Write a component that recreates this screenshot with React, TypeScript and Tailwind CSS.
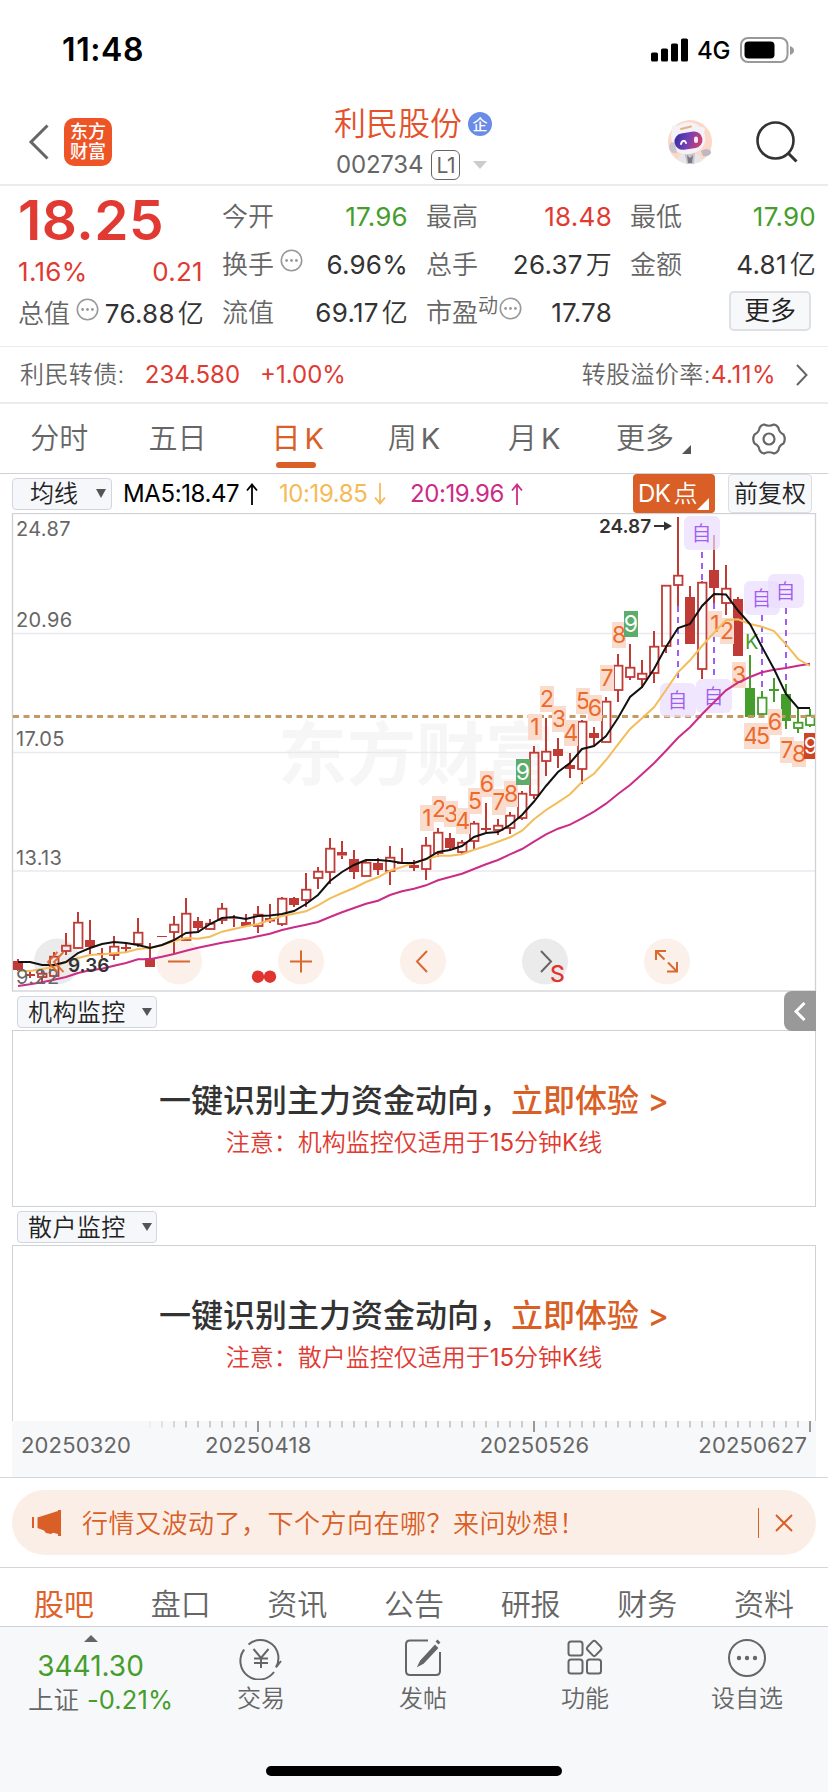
import React from "react";

type Candle = [top: number, bottom: number, high: number, low: number, kind: "h" | "f"];

/* Body top, body bottom, wick top, wick bottom, hollow or filled */
const candles: Candle[] = [
  [961, 970, 959, 971, "f"], [974, 976, 970, 978, "f"], [973, 977, 968, 982, "h"], [956, 976, 952, 977, "h"],
  [945, 951, 933, 955, "h"], [922, 948, 912, 949, "h"], [940, 947, 920, 954, "f"], [953, 954, 948, 958, "f"],
  [946, 955, 936, 960, "h"], [947, 949, 944, 953, "f"], [932, 944, 918, 947, "h"], [958, 967, 943, 967, "f"],
  [936, 937, 936, 937, "f"], [924, 932, 916, 954, "h"], [913, 940, 898, 940, "h"], [921, 928, 917, 933, "f"],
  [923, 929, 919, 930, "h"], [908, 920, 903, 924, "h"], [917, 918.5, 915, 927, "f"], [922, 926, 914, 927, "f"],
  [914, 926, 906, 933, "h"], [918, 921.5, 904, 923, "f"], [898, 924, 897, 926, "h"], [898, 905, 897, 907, "f"],
  [889, 900, 873, 907, "h"], [871, 878, 867, 889, "h"], [848, 872, 838, 884, "h"], [852, 855.5, 841, 859, "f"],
  [859, 872, 850, 879, "f"], [862, 876, 860, 876, "h"], [863, 870, 858, 875, "f"], [857, 871, 846, 885, "h"],
  [862, 864, 848, 864, "f"], [865, 868, 860, 871, "f"], [845, 869, 837, 880, "h"], [832, 853, 828, 857, "h"],
  [838, 848, 833, 850, "f"], [842, 852, 840, 854, "h"], [823, 841, 821, 850, "h"], [828, 830, 803, 832, "f"],
  [825, 830, 819, 835, "h"], [815, 828, 812, 834, "h"], [793, 818, 791, 820, "h"], [752, 795, 746, 799, "h"],
  [751, 761, 718, 776, "h"], [749, 756, 738, 768, "f"], [765, 769, 753, 778, "f"], [721, 769, 720, 784, "h"],
  [733, 738, 727, 745, "f"], [701, 742, 697, 742, "h"], [665, 690, 654, 702, "h"], [667, 677, 644, 680, "h"],
  [673, 679, 660, 688, "h"], [646, 673, 631, 683, "h"], [585, 646, 585, 653, "h"], [575, 585, 517, 606, "h"],
  [597, 644, 586, 644, "f"], [582, 669, 581, 679, "h"], [570, 588, 535, 603, "f"], [588, 603, 565, 615, "h"],
  [599, 656, 597, 656, "f"], [688, 717, 655, 717, "f"], [697, 714, 691, 717, "h"], [689, 691, 678, 702, "f"],
  [694, 721, 684, 729, "f"], [722, 728, 709, 733, "h"], [715, 725, 709, 727, "h"],
];

const ma5 = [
  962, 962, 965, 965, 962, 953, 948, 944, 942, 943, 945, 948, 945, 940, 933, 932, 924, 918, 917, 919, 916, 915.5, 914,
  911, 904, 895, 881, 872, 865, 860, 860, 861, 863, 863, 859, 852, 850, 846, 837, 833, 832, 825, 815, 801.5, 786, 772,
  763, 749, 746, 736, 718, 697, 687, 669, 647, 628, 624, 606, 594, 594.5, 610.5, 624, 647, 669, 694, 708, 708,
];
const ma10 = [
  971, 971, 969, 967, 962, 958, 955, 954.3, 953.3, 952.3, 949, 948, 945, 941, 938, 938.7, 936.7, 931.7, 929, 926.3, 924,
  920, 916, 913.7, 911.3, 905.3, 898.3, 893, 888, 882, 877.3, 870.7, 867, 863, 859.3, 855.7, 855.7, 854.3, 849.7, 846,
  841.7, 837.3, 830.7, 819.3, 810, 802.3, 794.3, 782, 773.7, 760, 744.3, 729, 718.3, 707.3, 690, 672.3, 660.3, 646,
  632.7, 620.3, 619.3, 624, 626.7, 631, 644.3, 659, 666,
];
const ma20 = [
  986, 984.3, 982.3, 979.7, 977, 973, 970.3, 968.7, 965.7, 963, 959.3, 959.3, 956.7, 954, 950.7, 947.7, 945.3, 942.7,
  940.7, 938.7, 936.3, 933.7, 930, 927.3, 924.7, 922, 917, 912.3, 908, 903.7, 900.7, 895, 891.3, 888.7, 885.3, 880.3,
  877, 873.7, 869, 864.3, 860, 854.3, 849, 841.7, 834.3, 828.7, 824.7, 818.3, 811.7, 803.7, 794, 785, 774.3, 763.3,
  750.7, 737.7, 727.3, 714.3, 702.3, 690.3, 682.7, 677, 672.3, 669.7, 668, 665.7, 663.7,
];

/* candle index, digit, top of the tag */
const counts: [number, string, number][] = [
  [34, "1", 805], [35, "2", 796], [36, "3", 801], [37, "4", 808], [38, "5", 788], [39, "6", 771], [40, "7", 789],
  [41, "8", 781], [42, "9", 759], [43, "1", 714], [44, "2", 686], [45, "3", 706], [46, "4", 720], [47, "5", 688],
  [48, "6", 695], [49, "7", 665], [50, "8", 622], [51, "9", 611], [58, "1", 611], [59, "2", 618], [60, "3", 662],
  [61, "4", 723], [62, "5", 723], [63, "6", 709], [64, "7", 737], [65, "8", 741],
];

/* x, badge top, line start, line end */
const selfMarks: [number, number, number, number][] = [
  [702, 516, 552, 581], [678, 683, 606, 682], [714, 679, 603, 679], [762, 581, 615, 691], [786, 574, 608, 684],
];

const xAt = (i: number) => 18 + 12 * i;
const line = (ys: number[]) => ys.map((y, i) => `${xAt(i)},${y}`).join(" ");

function Dots() {
  return (
    <svg className="h-[23px] w-[23px] shrink-0" viewBox="0 0 23 23">
      <circle cx="11.5" cy="11.5" r="10.2" fill="none" stroke="#999" strokeWidth="1.6" />
      <circle cx="6.6" cy="11.5" r="1.4" fill="#999" />
      <circle cx="11.5" cy="11.5" r="1.4" fill="#999" />
      <circle cx="16.4" cy="11.5" r="1.4" fill="#999" />
    </svg>
  );
}

function StatusBar() {
  return (
    <div className="flex h-[100px] items-center pl-[62px] pr-[34px]">
      <span className="text-[32px] font-semibold leading-none tracking-[0.6px] text-black">11:48</span>
      <svg className="ml-auto h-6 w-[38px]" viewBox="0 0 38 24">
        <rect x="0" y="14.5" width="7" height="9" rx="1.6" />
        <rect x="10" y="10.5" width="7" height="13" rx="1.6" />
        <rect x="20" y="5.5" width="7" height="18" rx="1.6" />
        <rect x="30" y="0.5" width="7" height="23" rx="1.6" />
      </svg>
      <span className="ml-[8px] mt-[2px] text-[24px] font-medium leading-none tracking-[-0.4px] text-black">4G</span>
      <svg className="ml-[10px] h-[26px] w-[54px]" viewBox="0 0 54 26">
        <rect x="1" y="1" width="46.5" height="24" rx="7" fill="none" stroke="#999" strokeWidth="2" />
        <rect x="4.5" y="4.5" width="30" height="17" rx="4" />
        <path d="M50 9c3 1 4 3 4 4.5S53 17 50 18z" fill="#999" />
      </svg>
    </div>
  );
}

function Robot() {
  return (
    <svg className="h-[46px] w-[46px]" viewBox="0 0 46 46">
      <defs>
        <linearGradient id="visor" x1="0" y1="0" x2="1" y2="0.3">
          <stop offset="0" stopColor="#2f2a9c" />
          <stop offset="0.5" stopColor="#6a3fb8" />
          <stop offset="1" stopColor="#c2407c" />
        </linearGradient>
      </defs>
      <circle cx="23" cy="23" r="22" fill="#fbd9c6" />
      <path d="M14 35l-4 5c3 3 8 5 13 5s11-2 13-4l-5-6z" fill="#e9e6ea" />
      <path d="M17 33h11l-1 12h-7z" fill="#c9c5cc" />
      <path d="M20 36l3 3 3-3-1 8h-4z" fill="#7d7885" />
      <path d="M5 11c-1-4 1-6 4-4l7-3c7-2 14 0 17 4 5 0 6 2 4 5 3 7 1 14-4 18-7 5-18 6-23 1C5 28 3 19 5 11z" fill="#f4f2f6" />
      <path d="M2 28c0-4 3-6 6-4l2 10c-4 1-8-2-8-6z" fill="#cbc6d0" />
      <path d="M34 32c4-3 10-2 10 1s-4 5-8 4z" fill="#bdb8c2" />
      <rect x="7.5" y="13.5" width="28" height="16.5" rx="8" fill="url(#visor)" transform="rotate(-9 21 22)" />
      <path d="M14 25c1-4 4-4 5-1" fill="none" stroke="#fff" strokeWidth="2" strokeLinecap="round" />
      <rect x="27" y="17.5" width="4" height="6.5" rx="2" fill="#ffe9f2" />
      <path d="M14 10l10-2.5" stroke="#eab08a" strokeWidth="2" strokeLinecap="round" />
    </svg>
  );
}

function Header() {
  return (
    <div className="flex h-[86px] items-center border-b-2 border-[#ebebeb] pl-[28px] pr-[29px]">
      <svg className="h-[36px] w-[22px]" viewBox="0 0 22 36" fill="none" stroke="#666" strokeWidth="3">
        <path d="M19.500 1.500L3 18l16.500 16.500" />
      </svg>
      <div className="ml-[14px] flex h-12 w-12 flex-col items-center justify-center rounded-[10px] bg-[#ed5526] text-[18px] font-medium leading-[20px] text-white">
        <span>东方</span>
        <span>财富</span>
      </div>
      <div className="ml-[222px] flex w-[160px] flex-col pt-[2px]">
        <div className="flex items-center">
          <span className="text-[32px] font-[350] leading-[44px] text-[#e4512b]">利民股份</span>
          <span className="ml-[6px] flex h-6 w-6 items-center justify-center rounded-full bg-[#6b8ce6] text-[15px] font-medium leading-none text-white">
            企
          </span>
        </div>
        <div className="flex h-[38px] items-center pl-[2px]">
          <span className="text-[24px] leading-none tracking-[-0.2px] text-[#666]">002734</span>
          <span className="ml-[8px] flex h-[30px] w-[29px] items-center justify-center rounded-[6px] border-[1.5px] border-[#666] text-[21px] leading-none tracking-[-0.5px] text-[#666]">
            L1
          </span>
          <svg className="ml-[13px] h-2 w-[14px]" viewBox="0 0 14 8">
            <path d="M0 0h14L7 8z" fill="#ccc" />
          </svg>
        </div>
      </div>
      <div className="ml-auto flex items-center gap-[42px]">
        <Robot />
        <svg className="h-[44px] w-[44px]" viewBox="0 0 44 44" fill="none" stroke="#333" strokeWidth="2.6">
          <circle cx="20.5" cy="20.5" r="18" />
          <path d="M33 33l8.500 8.500" strokeWidth="3" />
        </svg>
      </div>
    </div>
  );
}

function Stat({ label, value, unit, color, children }: { label: string; value: string; unit?: string; color: string; children?: React.ReactNode }) {
  return (
    <div className="flex h-12 items-center">
      <span className="font-[350] text-[#666]">{label}</span>
      {children}
      <span className={`ml-auto tracking-[0.25px] ${color}`}>
        {value}
        {unit && <span className="ml-[3px] font-[350]">{unit}</span>}
      </span>
    </div>
  );
}

function Quote() {
  return (
    <div className="flex h-[161px] border-b border-[#ebebeb] pl-[18px] text-[26px] leading-none">
      <div className="w-[186px]">
        <div className="flex h-[68px] items-center text-[55px] font-semibold tracking-[0.5px] text-[#e03a32]">18.25</div>
        <div className="flex h-[36px] items-center justify-between tracking-[0.3px] text-[#e03a32]">
          <span>1.16%</span>
          <span className="pr-px">0.21</span>
        </div>
        <div className="flex h-[47px] items-center">
          <span className="font-[350] text-[#666]">总值</span>
          <span className="mb-[9px] ml-[6px]"><Dots /></span>
          <span className="ml-auto tracking-[0.25px] text-[#333]">76.88<span className="ml-[3px] font-[350]">亿</span></span>
        </div>
      </div>
      <div className="ml-[18px] w-[186px] pt-[7px]">
        <Stat label="今开" value="17.96" color="text-[#459e2b]" />
        <Stat label="换手" value="6.96%" color="text-[#333]">
          <span className="mb-[9px] ml-[6px]"><Dots /></span>
        </Stat>
        <Stat label="流值" value="69.17" unit="亿" color="text-[#333]" />
      </div>
      <div className="ml-[18px] w-[186px] pt-[7px]">
        <Stat label="最高" value="18.48" color="text-[#e03a32]" />
        <Stat label="总手" value="26.37" unit="万" color="text-[#333]" />
        <Stat label="市盈" value="17.78" color="text-[#333]">
          <span className="mb-[14px] text-[20px] font-[350] text-[#666]">动</span>
          <span className="mb-[9px] ml-[1px]"><Dots /></span>
        </Stat>
      </div>
      <div className="ml-[18px] w-[186px] pt-[7px]">
        <Stat label="最低" value="17.90" color="text-[#459e2b]" />
        <Stat label="金额" value="4.81" unit="亿" color="text-[#333]" />
        <div className="ml-[99px] mt-[2px] flex h-10 w-[82px] items-center justify-center rounded-[5px] border-2 border-[#dfe0e6] bg-[#f7f8fa] font-[350] text-[#222]">
          更多
        </div>
      </div>
    </div>
  );
}

function BondRow() {
  return (
    <div className="flex h-[57px] items-center border-b-2 border-[#ebebeb] pl-5 pr-[20px] text-[24px] leading-none text-[#666]">
      <span className="font-[350] tracking-[0.4px]">利民转债:</span>
      <span className="ml-[20px] text-[#e03a32]">234.580</span>
      <span className="ml-[20px] text-[#e03a32]">+1.00%</span>
      <span className="ml-auto font-[350] tracking-[0.4px]">转股溢价率:</span>
      <span className="tracking-[0.5px] text-[#e03a32]">4.11%</span>
      <svg className="ml-[19px] h-[22px] w-[13px]" viewBox="0 0 13 22" fill="none" stroke="#666" strokeWidth="2">
        <path d="M2 1l9.500 10L2 21" />
      </svg>
    </div>
  );
}

function Tabs() {
  return (
    <div className="grid h-[70px] grid-cols-7 border-b border-[#d0d1d6] text-[29px] font-[350] leading-none text-[#666]">
      <div className="flex items-center justify-center">分时</div>
      <div className="flex items-center justify-center">五日</div>
      <div className="flex flex-col items-center font-normal text-[#d95f26]">
        <span className="flex h-[58px] items-center gap-1 pl-1 pt-[11px]">日<span>K</span></span>
        <span className="h-[6px] w-10 rounded-full bg-[#d95f26]" />
      </div>
      <div className="flex items-center justify-center gap-1">周<span className="font-normal">K</span></div>
      <div className="flex items-center justify-center gap-1 pl-1">月<span className="font-normal">K</span></div>
      <div className="flex items-center justify-center pl-[6px]">
        更多
        <svg className="ml-2 mt-[22px] h-[9px] w-[9px]" viewBox="0 0 9 9"><path d="M9 0v9H0z" fill="#555" /></svg>
      </div>
      <div className="flex items-center justify-center">
        <svg className="h-[34px] w-[34px]" viewBox="0 0 34 34" fill="none" stroke="#666" strokeWidth="2.2">
          <path d="M12 2.500Q17 5 22 2.500Q25 3 26.500 6Q27 10.500 31.500 12.500Q34 17 31.500 21.500Q27 23.500 26.500 28Q25 31 22 31.500Q17 29 12 31.500Q9 31 7.500 28Q7 23.500 2.500 21.500Q0 17 2.500 12.500Q7 10.500 7.500 6Q9 3 12 2.500Z" />
          <circle cx="17" cy="17" r="5.5" />
        </svg>
      </div>
    </div>
  );
}

function Indicators() {
  return (
    <div className="flex h-[39px] items-center pl-3 pr-4 text-[24px] leading-none">
      <div className="flex h-8 w-[100px] items-center rounded-[4px] border-[1.5px] border-[#d4d6dd] bg-[#f6f7fa] pl-[17px] font-[350] text-[#222]">
        均线
        <svg className="ml-[18px] h-[9px] w-[10px]" viewBox="0 0 10 9"><path d="M0 0h10L5 9z" fill="#555" /></svg>
      </div>
      <MaText className="ml-[11px] w-[135px] text-black" label="MA5:18.47" up />
      <MaText className="ml-[21px] w-[110px] text-[#f5bb57]" label="10:19.85" />
      <MaText className="ml-[21px] text-[#cb2c87]" label="20:19.96" up />
      <div className="ml-auto flex h-[39px] w-[82px] rounded-[4px] bg-[#d95f26] pl-[5px] text-white">
        <span className="flex items-center gap-[3px] tracking-[-0.5px]">DK<span className="font-[350]">点</span></span>
        <svg className="mt-6 h-3 w-3 shrink-0" viewBox="0 0 12 12"><path d="M12 0v12H0z" fill="#fff" /></svg>
      </div>
      <div className="ml-[13px] flex h-[39px] w-[84px] items-center justify-center rounded-[4px] border-[1.5px] border-[#dcdee4] bg-[#f7f8fa] font-[350] text-[#222]">
        前复权
      </div>
    </div>
  );
}

function MaText({ label, up, className }: { label: string; up?: boolean; className: string }) {
  return (
    <span className={`flex items-center tracking-[-0.4px] ${className}`}>
      {label}
      <svg className="ml-[7px] h-[22px] w-3 shrink-0" viewBox="0 0 12 22" fill="none" stroke="currentColor" strokeWidth="1.8">
        {up ? <path d="M6 22V1.500M1 7.500l5-6 5 6" /> : <path d="M6 0v20.500M1 14.500l5 6 5-6" />}
      </svg>
    </span>
  );
}

function Chart() {
  return (
    <svg className="block h-[479px] w-[828px]" viewBox="0 513 828 479">
      <defs>
        <clipPath id="plot"><rect x="13" y="514" width="802" height="477" /></clipPath>
      </defs>
      <text x="278" y="780" fontSize="69" fontWeight="700" fill="#f6f6f7">东方财富</text>
      <g stroke="#e9e9ef" strokeWidth="1.5">
        <path d="M13 633.500H815M13 752.500H815M13 871H815" />
      </g>
      <rect x="12.5" y="513.5" width="803" height="477.5" fill="none" stroke="#d0d1d6" strokeWidth="1.3" />

      <g>
        {[57, 179, 301, 423, 545, 667].map((x, i) => (
          <circle key={x} cx={x} cy="961.5" r="23" fill={i === 0 || i === 4 ? "#ebebeb" : "#fcf0ea"} />
        ))}
      </g>

      <g clipPath="url(#plot)">
        {candles.map(([top, bottom, high, low, kind], i) => {
          const color = i > 60 ? "#459e2b" : "#c03b35";
          const x = xAt(i);
          return (
            <g key={i} stroke={color} fill={color}>
              <path d={`M${x} ${high}V${top}M${x} ${bottom}V${low}`} strokeWidth="2" />
              {kind === "f" ? (
                <rect x={x - 5} y={top} width="10" height={bottom - top} stroke="none" />
              ) : (
                <rect x={x - 4} y={top + 0.7} width="8.5" height={bottom - top - 0.7} fill="none" strokeWidth="1.8" />
              )}
            </g>
          );
        })}
        <path d="M13 716.500H815" stroke="#c39a63" strokeWidth="3" strokeDasharray="6 4.5" />
        {selfMarks.map(([x, top, from, to]) => (
          <g key={x}>
            <path d={`M${x} ${from}V${to}`} stroke="#9f5df2" strokeWidth="2" strokeDasharray="6 5" />
            <rect x={x - 18} y={top} width="36" height="34" rx="6" fill="#e9dcfc" fillOpacity="0.7" />
            <text x={x - 0.5} y={top + 25} fontSize="20" fontWeight="350" textAnchor="middle" fill="#9f5df2">自</text>
          </g>
        ))}
        {counts.map(([i, digit, top]) => (
          <g key={i}>
            <rect x={xAt(i) - 6} y={top} width="14" height="26" fill={digit === "9" ? "#5cad6c" : "#f9dccd"} />
            <text x={xAt(i) + 1} y={top + 21} fontSize="23" textAnchor="middle" fill={digit === "9" ? "#fff" : "#ee6a2b"}>
              {digit}
            </text>
          </g>
        ))}
        <rect x="804" y="733" width="14" height="26" fill="#cd4524" />
        <text x="811" y="754" fontSize="23" textAnchor="middle" fill="#fff">9</text>
        <text x="745" y="649" fontSize="20" fill="#459e2b">K</text>
        <polyline points={line(ma20)} fill="none" stroke="#cb2c87" strokeWidth="2" />
        <polyline points={line(ma10)} fill="none" stroke="#f3bd5a" strokeWidth="2" />
        <polyline points={line(ma5)} fill="none" stroke="#111" strokeWidth="2" />
      </g>

      <g fontSize="20" fill="#666" letterSpacing="0.35">
        <text x="16" y="536">24.87</text>
        <text x="16" y="627">20.96</text>
        <text x="16" y="746">17.05</text>
        <text x="16" y="865">13.13</text>
        <text x="16" y="984">9.22</text>
      </g>
      <g fontSize="19" fontWeight="600" fill="#333">
        <text x="599" y="533">24.87</text>
        <text x="68" y="972">9.36</text>
      </g>
      <path d="M654 526H666" stroke="#333" strokeWidth="2" />
      <path d="M664 521.500l8 4.500-8 4.500z" fill="#333" />

      <g fill="none" strokeWidth="2" stroke="#d9692f">
        <path d="M57.500 952L48 962l9.500 10M63.500 952L54 962l9.500 10" strokeOpacity="0.9" />
        <path d="M168 961.500H190M290 961.500H312M301 950.500V972.500" />
        <path d="M427 951L417 961.500l10 10.500" />
        <path d="M541 951l10 10.500-10 10.500" stroke="#666" />
        <path d="M656 960V951H666M656.500 951.500L664.500 959.500M677 962V971.500H667M668 962.500L676.500 971" />
      </g>
      <circle cx="258" cy="976.7" r="6.2" fill="#e0352f" />
      <circle cx="270" cy="976.7" r="6.2" fill="#e0352f" />
      <text x="550" y="982" fontSize="23" fontWeight="500" fill="#e0352f">S</text>
    </svg>
  );
}

function Monitor({ name, last }: { name: string; last?: boolean }) {
  return (
    <div>
      <div className="flex h-[38px] items-center pl-[17px]">
        <div className="mt-[2px] flex h-8 w-[140px] items-center rounded-[4px] border-[1.5px] border-[#d4d6dd] bg-[#f6f7fa] pl-[10px] text-[24px] leading-none text-[#222]">
          <span className="mt-px w-[98px] font-[350] tracking-[0.4px]">{name}</span>
          <svg className="ml-[16px] h-[8px] w-[10px] shrink-0" viewBox="0 0 10 8"><path d="M0 0h10L5 8z" fill="#555" /></svg>
        </div>
        {!last && (
          <div className="-my-px ml-auto mr-3 flex h-10 w-8 items-center justify-center rounded-l-[8px] bg-[#999]">
            <svg className="h-[19px] w-3" viewBox="0 0 12 19" fill="none" stroke="#fff" strokeWidth="3"><path d="M10.500 1L2 9.500l8.500 8.500" /></svg>
          </div>
        )}
      </div>
      <div className={`mx-3 flex flex-col items-center border border-[#d0d1d6] pt-[50px] leading-none ${last ? "h-[176px] border-b-0" : "h-[177px]"}`}>
        <div className="flex h-10 items-center text-[32px] font-medium text-[#333]">
          一键识别主力资金动向，<span className="text-[#d95f26]">立即体验&nbsp;&gt;</span>
        </div>
        <div className="mt-[6px] flex h-8 items-center text-[24px] font-[350] text-[#e03a32]">注意：{name}仅适用于<span className="font-normal">15</span>分钟<span className="font-normal">K</span>线</div>
      </div>
    </div>
  );
}

function Axis() {
  return (
    <div className="h-[57px] border-b-[1.5px] border-[#d5d6da] px-3">
      <div className="h-full bg-[#f7f8fa]">
        <svg className="block h-[11px] w-[804px]" viewBox="12 0 804 11">
          {Array.from({ length: 56 }, (_, k) => k + 11).map((i) => {
            const major = i === 20 || i === 43 || i === 66;
            return (
              <rect key={i} x={xAt(i) - 1} y="0" width="2" height={major ? 11 : 6.5} fill={major ? "#999" : "#ccc"} fillOpacity={i < 14 ? (i - 10) / 4 : 1} />
            );
          })}
        </svg>
        <div className="flex pl-[9px] pr-[9px] pt-[2px] text-[22px] leading-[22px] tracking-[0.15px] text-[#666]">
          <span>20250320</span>
          <span className="ml-[74px] tracking-[0.3px]">20250418</span>
          <span className="ml-auto mr-[109px]">20250526</span>
          <span>20250627</span>
        </div>
      </div>
    </div>
  );
}

function Banner() {
  return (
    <div className="h-[90px] border-b-[1.5px] border-[#d5d6da] px-3 pt-[12px]">
      <div className="flex h-[65px] items-center rounded-full bg-[#fbeee7] pl-5 pr-[23px] text-[26px] leading-none text-[#d95f26]">
        <svg className="h-[26px] w-[30px]" viewBox="0 0 30 26" fill="#d95f26">
          <path d="M0 7h2v11H0zM5.500 7.500L26 1V0h3v26h-3v-2l-5-1.300-2 1.300-5-1-2-2.500-6.500-2.500z" />
        </svg>
        <span className="ml-[20px] mt-[3px] font-[350] tracking-[0.5px]">行情又波动了，下个方向在哪？来问妙想！</span>
        <span className="ml-auto h-[30px] w-[1.5px] bg-[#d95f26]" />
        <svg className="ml-[16px] h-[18px] w-[18px]" viewBox="0 0 18 18" fill="none" stroke="#d95f26" strokeWidth="2">
          <path d="M1 1l16 16M17 1L1 17" />
        </svg>
      </div>
    </div>
  );
}

function SectionTabs() {
  const names = ["股吧", "盘口", "资讯", "公告", "研报", "财务", "资料"];
  return (
    <div className="flex h-[59px] items-center justify-between border-b border-[#cfd1da] px-[34px] pt-[13px] text-[30px] font-[350] leading-none text-[#666]">
      {names.map((name, i) => (
        <span key={name} className={i === 0 ? "font-normal text-[#e0612a]" : ""}>{name}</span>
      ))}
    </div>
  );
}

function NavItem({ label, children }: { label: string; children: React.ReactNode }) {
  return (
    <div className="flex w-[162px] flex-col items-center pt-[9px]">
      <svg className="h-[44px] w-[44px]" viewBox="0 0 44 44" fill="none" stroke="#666" strokeWidth="2">{children}</svg>
      <span className="mt-[7px] text-[24px] font-[350] leading-none text-[#666]">{label}</span>
    </div>
  );
}

function BottomNav() {
  return (
    <div className="flex h-[165px] flex-col bg-[#f7f8fa]">
      <div className="flex pl-px">
        <div className="flex w-[179px] flex-col items-center pt-2 leading-none">
          <svg className="h-[7px] w-[14px]" viewBox="0 0 14 7"><path d="M7 0l7 7H0z" fill="#666" /></svg>
          <span className="mt-[10px] text-[28px] text-[#459e2b]">3441.30</span>
          <span className="mt-[7px] flex pl-[20px] text-[25.5px] text-[#666]">
            <span className="font-[350]">上证</span>
            <span className="ml-[8px] tracking-[0.1px] text-[#459e2b]">-0.21%</span>
          </span>
        </div>
        <NavItem label="交易">
          <path d="M9.500 8.500A18 18 0 0 1 37 31M35 36A18 18 0 0 1 5 14M2 19l3-5.500M42 25l-5 6.500M14.500 13l7.500 9 7.500-9M22 22v10M15 22.500h14M15 27h14" />
        </NavItem>
        <NavItem label="发帖">
          <path d="M27 4.500H9q-4 0-4 4V35q0 4 4 4h26q4 0 4-4V16" />
          <path d="M34 10L20 25l-2 4 4-2 14-15z" fill="#666" />
          <path d="M36 7l2-2" strokeWidth="4" />
        </NavItem>
        <NavItem label="功能">
          <rect x="5.5" y="5.5" width="14" height="14" rx="2.5" />
          <rect x="5.5" y="23.5" width="14" height="14" rx="2.5" />
          <rect x="24" y="23.5" width="14" height="14" rx="2.5" />
          <path d="M29.800 5.400q1.400-1.400 2.800 0l5.200 5.400q1.400 1.600 0 3.200l-5.200 5.400q-1.400 1.400-2.800 0l-5.200-5.400q-1.400-1.600 0-3.200z" />
        </NavItem>
        <NavItem label="设自选">
          <circle cx="22" cy="22" r="18" />
          <g fill="#666" stroke="none"><circle cx="14" cy="22" r="2.2" /><circle cx="22" cy="22" r="2.2" /><circle cx="30" cy="22" r="2.2" /></g>
        </NavItem>
      </div>
      <div className="mx-auto mb-4 mt-auto h-[10px] w-[296px] rounded-full bg-black" />
    </div>
  );
}

export default function App() {
  return (
    <div className="h-[1792px] w-[828px] overflow-hidden bg-white font-['Inter','Noto_Sans_CJK_SC',sans-serif]">
      <StatusBar />
      <Header />
      <Quote />
      <BondRow />
      <Tabs />
      <Indicators />
      <Chart />
      <Monitor name="机构监控" />
      <Monitor name="散户监控" last />
      <Axis />
      <Banner />
      <SectionTabs />
      <BottomNav />
    </div>
  );
}
